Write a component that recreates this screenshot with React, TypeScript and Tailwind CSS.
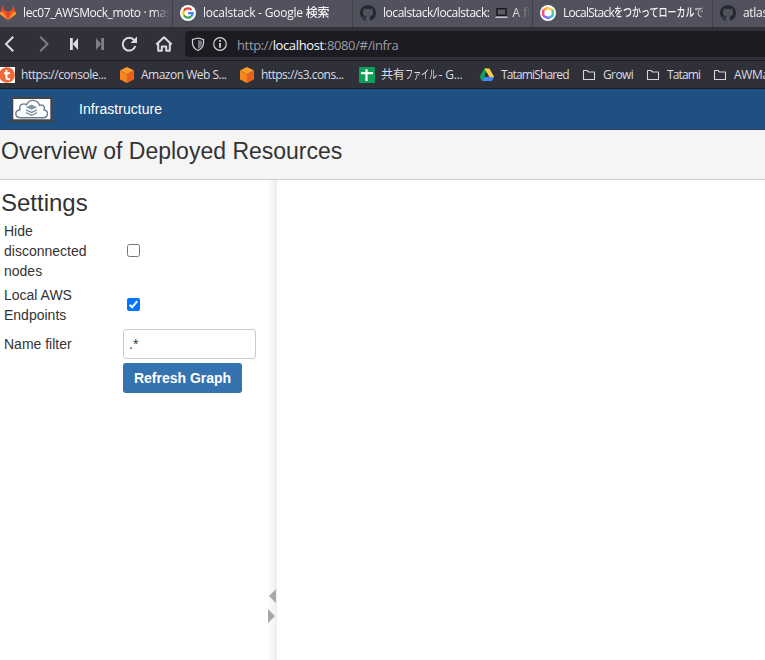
import React from "react";

const UI = "font-['Open_Sans','Noto_Sans_CJK_JP',sans-serif]";

function GitLab() {
  return (
    <svg width="16" height="16" viewBox="0 0 16 16" className="shrink-0">
      <path d="M8 15 L0 9 L2.6 1 L5 6.5 H11 L13.4 1 L16 9Z" fill="#fc6d26" />
      <path d="M8 15 L5 6.5 H11Z" fill="#e24329" />
      <path d="M0 9 L1 6.5 L8 15Z M16 9 L15 6.5 L8 15Z" fill="#fca326" />
      <path d="M2.6 1 L5 6.5 H1Z M13.4 1 L11 6.5 H15Z" fill="#e24329" />
    </svg>
  );
}

function Google() {
  return (
    <svg width="16" height="16" viewBox="0 0 16 16" className="shrink-0">
      <circle cx="8" cy="8" r="8" fill="#fff" />
      <g fill="none" strokeWidth="2.2">
        <path d="M11.4 4.9 A4.7 4.7 0 0 0 3.9 5.7" stroke="#ea4335" />
        <path d="M3.9 5.7 A4.7 4.7 0 0 0 3.9 10.3" stroke="#fbbc05" />
        <path d="M3.9 10.3 A4.7 4.7 0 0 0 11.2 11.4" stroke="#34a853" />
        <path d="M11.2 11.4 A4.7 4.7 0 0 0 12.7 8.1 H8.1" stroke="#4285f4" />
      </g>
    </svg>
  );
}

function GitHub() {
  return (
    <svg width="16" height="16" viewBox="0 0 16 16" className="shrink-0" fill="#24292e">
      <path d="M8 0C3.58 0 0 3.58 0 8c0 3.54 2.29 6.53 5.47 7.59.4.07.55-.17.55-.38 0-.19-.01-.82-.01-1.49-2.01.37-2.53-.49-2.69-.94-.09-.23-.48-.94-.82-1.13-.28-.15-.68-.52-.01-.53.63-.01 1.08.58 1.23.82.72 1.21 1.87.87 2.33.66.07-.52.28-.87.51-1.07-1.78-.2-3.64-.89-3.64-3.95 0-.87.31-1.59.82-2.15-.08-.2-.36-1.02.08-2.12 0 0 .67-.21 2.2.82.64-.18 1.32-.27 2-.27s1.36.09 2 .27c1.53-1.04 2.2-.82 2.2-.82.44 1.1.16 1.92.08 2.12.51.56.82 1.27.82 2.15 0 3.07-1.87 3.75-3.65 3.95.29.25.54.73.54 1.48 0 1.07-.01 1.93-.01 2.2 0 .21.15.46.55.38A8.01 8.01 0 0 0 16 8c0-4.42-3.58-8-8-8z" />
    </svg>
  );
}

function ColorRing() {
  return (
    <svg width="16" height="16" viewBox="0 0 16 16" className="shrink-0">
      <circle cx="8" cy="8" r="8" fill="#fff" />
      <g fill="none" strokeWidth="2.5">
        <path d="M3 5.5 L8 2.5" stroke="#ff9d2e" />
        <path d="M7 2.7 L12.8 5.2" stroke="#f7cf3a" />
        <path d="M12.8 4.8 V10.8" stroke="#55c8a0" />
        <path d="M13 10.5 L8 13.4" stroke="#3ab5e8" />
        <path d="M9 13.4 L3.2 10.8" stroke="#8a6be8" />
        <path d="M3.2 11 V5" stroke="#f0567c" />
      </g>
    </svg>
  );
}

function Cube() {
  return (
    <svg width="16" height="16" viewBox="0 0 16 16" className="shrink-0">
      <path d="M8 0 L15 3.6 L8 7 L1 3.6Z" fill="#ff9d2c" />
      <path d="M1 3.6 L8 7 V16 L1 12.4Z" fill="#f58320" />
      <path d="M15 3.6 L8 7 V16 L15 12.4Z" fill="#e8611c" />
    </svg>
  );
}

function Teratail() {
  return (
    <svg width="16" height="16" viewBox="0 0 16 16" className="-ml-px shrink-0">
      <path fill="#fff" d="M0 0H16V16H0z" />
      <circle cx="8" cy="8" r="7.8" fill="#f06a35" />
      <path d="M7.4 3 V10.2 Q7.4 12.2 9.4 12.2 H11 M5 6.2 H11" fill="none" stroke="#fff" strokeWidth="2.1" />
    </svg>
  );
}

function Sheet() {
  return (
    <svg width="16" height="16" viewBox="0 0 16 16" className="shrink-0">
      <rect width="16" height="16" rx="1" fill="#0f9d58" />
      <path d="M2 6.2H14M7.5 2.2V14" stroke="#fff" strokeWidth="2.2" />
    </svg>
  );
}

function Drive() {
  return (
    <svg width="16" height="16" viewBox="0 0 16 16" className="shrink-0">
      <path d="M5.4 1.5H8L5.3 10 3 14 .5 10Z" fill="#11a05a" />
      <path d="M5.4 1.5H10.4L15.2 10H10.2Z" fill="#ffcf40" />
      <path d="M5.3 10H15.2L12.8 14H3Z" fill="#4688f4" />
      <path d="M8 6L5.5 10H10.4Z" fill="#2f3037" />
    </svg>
  );
}

function Folder() {
  return (
    <svg width="14" height="12" viewBox="0 0 14 12" className="mr-px shrink-0">
      <path d="M1.5 10.5V1.5H5L6.5 3H12.5V10.5Z" fill="none" stroke="#d3d3d9" strokeWidth="1.1" strokeLinejoin="round" />
    </svg>
  );
}

function Laptop() {
  return (
    <svg width="13" height="12" viewBox="0 0 13 12" className="ml-1.5 shrink-0">
      <rect x="2" y="1.7" width="9" height="6.6" fill="#5a5c62" stroke="#17181c" strokeWidth="1.5" />
      <path d="M1 9.5H12L13 11H0Z" fill="#c5c5c9" />
    </svg>
  );
}

function Tab({ icon, children, className = "" }: { icon: React.ReactNode; children: React.ReactNode; className?: string }) {
  return (
    <div className={`flex h-[27px] w-[180px] shrink-0 items-center overflow-hidden border-r border-[#3f3f49] pb-[2px] pl-[7px] ${className}`}>
      {icon}
      <div className="ml-[7px] flex w-[147px] items-center overflow-hidden whitespace-nowrap [mask-image:linear-gradient(to_right,black_130px,transparent_147px)]">
        {children}
      </div>
    </div>
  );
}

function Bookmark({ icon, children, className }: { icon: React.ReactNode; children: React.ReactNode; className: string }) {
  return (
    <div className={`flex shrink-0 items-center gap-[6px] whitespace-nowrap ${className}`}>
      {icon}
      <span>{children}</span>
    </div>
  );
}

function NavIcons() {
  return (
    <svg width="185" height="33" viewBox="0 27 185 33" className="shrink-0" fill="none" stroke="#dbdce1" strokeWidth="2">
      <path d="M13.3 36.7 L6 44 L13.3 51.3" />
      <path d="M40.2 36.7 L47.5 44 L40.2 51.3" stroke="#7d7e86" />
      <path d="M70 38H72.8V50H70Z M78 38V50L72.8 44Z" fill="#dbdce1" stroke="none" />
      <path d="M104 38H101.2V50H104Z M96 38V50L101.2 44Z" fill="#7d7e86" stroke="none" />
      <path d="M134.2 40.2 A6.4 6.4 0 1 0 135.3 46" />
      <path d="M137 36.5V43H130.5Z" fill="#dbdce1" stroke="none" />
      <path d="M156.3 44.5 L164 37.2 L171.7 44.5 M158.2 43.5V50.8H161.8V46.5H166.2V50.8H169.8V43.5" strokeLinejoin="round" />
    </svg>
  );
}

function Logo() {
  return (
    <svg width="50" height="28" viewBox="0 0 50 28" className="shrink-0">
      <path d="M5 1.7H46.7V26H5Z" fill="#41464d" />
      <path d="M7.3 4H44.3V24.3H7.3Z" fill="#fff" />
      <path d="M1 25.5H50L48 27.5H3Z" fill="#3d444d" />
      <g transform="translate(0 2.3)">
        <path d="M15 20.5C8.5 20.5 8 13.5 14 12.5C12.5 7 18 5.5 20.5 7.5C23 1.5 31.5 1.5 33.5 8C38.5 6.5 39 11 38 12.5C43 13.5 42.5 20.5 37 20.5Z" fill="#fff" stroke="#6a7c92" strokeWidth="1.4" />
        <path d="M20 10L25.5 7.3L31.2 10L25.5 12.5Z" fill="#8093a8" />
        <path d="M20 12.6L25.5 15.2L31.2 12.6M20 15.3L25.5 18L31.2 15.3" fill="none" stroke="#8093a8" strokeWidth="1.4" />
      </g>
    </svg>
  );
}

export default function App() {
  return (
    <div className="h-[660px] w-[765px] overflow-hidden bg-white font-['Liberation_Sans',Arial,sans-serif] text-[14px] leading-5 text-[#333]">
      <div className={`${UI} text-[12px] leading-4 text-[#f5f5f7]`}>
        <div className="flex h-[27px] overflow-hidden bg-[#52525e] font-medium">
          <Tab icon={<GitLab />} className="-ml-[7px]">
            <span className="tracking-[-0.4px]">lec07_AWSMock_moto · master</span>
          </Tab>
          <Tab icon={<Google />}>
            <span className="tracking-[-0.22px]">localstack - Google 検索</span>
          </Tab>
          <Tab icon={<GitHub />}>
            <span className="tracking-[-0.45px]">localstack/localstack:</span>
            <Laptop />
            <span className="ml-1">A fully</span>
          </Tab>
          <Tab icon={<ColorRing />}>
            <span className="tracking-[-0.75px]">LocalStack</span>
            <span className="inline-block origin-left scale-x-[0.75]">をつかってローカルで</span>
          </Tab>
          <Tab icon={<GitHub />}>
            <span className="tracking-[-0.3px]">atlassian</span>
          </Tab>
        </div>
        <div className="flex h-[33px] items-center bg-[#2f3038]">
          <NavIcons />
          <div className="mt-px flex h-[26px] flex-1 items-center rounded-l-[4px] bg-[#1c1b22] pl-[6px]">
            <svg width="40" height="18" viewBox="191 35 40 18" fill="none" stroke="#d3d3d9" strokeWidth="1.2">
              <path d="M198 38L203.5 39.5V43Q203.3 48 198 50.5Q192.7 48 192.5 43V39.5Z" />
              <path d="M198 40L202 41V43.5Q201.8 47 198 49Z" fill="#777780" stroke="none" />
              <circle cx="220" cy="44" r="6.3" />
              <path d="M220 43V47.7M220 40V41.7" strokeWidth="1.8" />
            </svg>
            <span className="ml-[6px] mt-px text-[13px] leading-5 tracking-[-0.36px] text-[#9d9da6]">
              http://<span className="font-medium text-[#fbfbfe]">localhost</span>:8080/#/infra
            </span>
          </div>
        </div>
        <div className="flex h-[29px] items-center overflow-hidden border-y border-[#1b1a21] bg-[#2f3038] text-[#dddde3]">
          <Bookmark icon={<Teratail />} className="w-[119px] tracking-[-0.46px]">https://console...</Bookmark>
          <Bookmark icon={<Cube />} className="w-[120px] tracking-[-0.5px]">Amazon Web S...</Bookmark>
          <Bookmark icon={<Cube />} className="w-[120px] tracking-[-0.54px]">https://s3.cons...</Bookmark>
          <Bookmark icon={<Sheet />} className="w-[120px] tracking-[-0.2px]">
            <span className="inline-flex">
              共有
              <span className="inline-block w-[32px] origin-left scale-x-[0.68]">ファイル</span>
              <span className="ml-[2px]">- G...</span>
            </span>
          </Bookmark>
          <Bookmark icon={<Drive />} className="w-[103px] tracking-[-0.85px]">TatamiShared</Bookmark>
          <Bookmark icon={<Folder />} className="w-[64px] tracking-[-0.6px]">Growi</Bookmark>
          <Bookmark icon={<Folder />} className="w-[67px] tracking-[-0.85px]">Tatami</Bookmark>
          <Bookmark icon={<Folder />} className="tracking-[-0.3px]">AWMaster</Bookmark>
        </div>
      </div>

      <header className="flex h-[41px] items-center border-b border-[#2a3d5c] bg-[#205081] pl-[6px] text-white">
        <Logo />
        <span className="ml-[23px] tracking-[0.04px]">Infrastructure</span>
      </header>
      <div className="h-[50px] border-b border-[#ccc] bg-[#f5f5f5] pl-px pt-[7px]">
        <h1 className="text-[23px] leading-7">Overview of Deployed Resources</h1>
      </div>

      <div className="flex h-[480px]">
        <aside className="flex w-[277px] justify-between">
          <div className="pl-px pt-[9px]">
            <h2 className="text-[24px] leading-7">Settings</h2>
            <div className="grid grid-cols-[119px_133px] items-center gap-y-1 pl-[3px] pt-1">
              <div className="w-[90px]">Hide disconnected nodes</div>
              <span className="mb-[2px] ml-1 block size-[13px] rounded-[2.5px] border border-[#767676]" />
              <div className="w-[90px]">Local AWS Endpoints</div>
              <span className="mb-[2px] ml-1 block size-[13px] rounded-[2px] bg-[#0075ff]">
                <svg width="13" height="13" viewBox="0 0 13 13">
                  <path d="M2.7 6.7L5.2 9.2L10.2 3.2" fill="none" stroke="#fff" strokeWidth="2" />
                </svg>
              </span>
              <div>Name filter</div>
              <div className="flex h-[30px] items-center rounded-[3px] border border-[#ccc] pl-[5px]">.*</div>
              <button className="col-start-2 h-[30px] w-[119px] rounded-[3px] bg-[#3572b0] text-[14px] font-bold text-white">Refresh Graph</button>
            </div>
          </div>
          <div className="flex w-[10px] flex-col bg-gradient-to-r from-white to-[#ededed] pt-[409px]">
            <svg width="10" height="34" viewBox="0 0 10 34" fill="#a8a8a8">
              <path d="M9 0V14L2 7Z M1 20V34L8 27Z" />
            </svg>
          </div>
        </aside>
        <main className="flex-1 bg-white" />
      </div>
    </div>
  );
}
